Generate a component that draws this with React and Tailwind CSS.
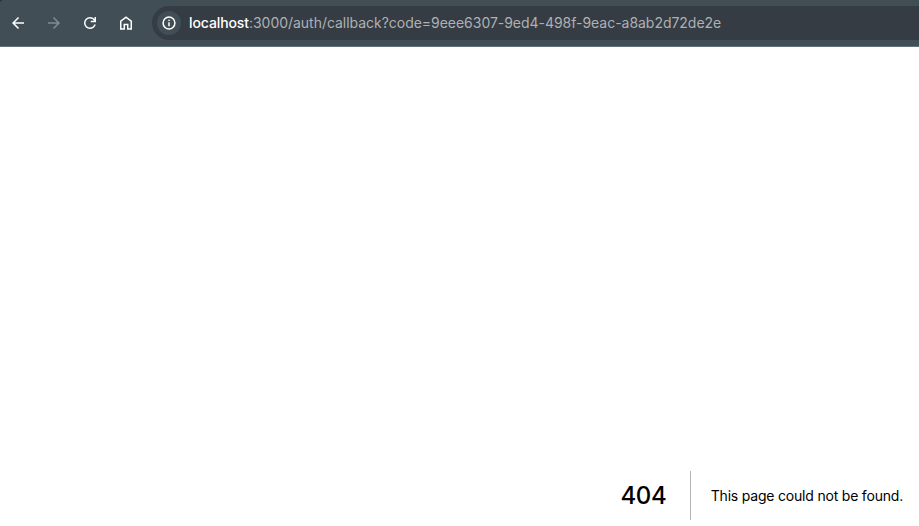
function Icon({ d, className = "" }) {
  return (
    <svg viewBox="0 0 24 24" className={`size-[18px] shrink-0 fill-current ${className}`} aria-hidden="true">
      <path d={d} />
    </svg>
  );
}

function NavButton({ label, d, className }) {
  return (
    <button type="button" aria-label={label} className="flex size-9 items-center justify-center">
      <Icon d={d} className={className} />
    </button>
  );
}

function Toolbar() {
  return (
    <div className="shrink-0 bg-[#252d33]">
      <header className="flex h-[47px] items-center rounded-tl-[3px] border-b border-[#62727a] bg-[#414e56] text-white">
        <nav className="flex">
          <NavButton label="Back" d="M20 11H7.83l5.59-5.59L12 4l-8 8 8 8 1.41-1.41L7.83 13H20v-2z" />
          <NavButton label="Forward" className="text-[#828b90]" d="M12 4l-1.41 1.41L16.17 11H4v2h12.17l-5.58 5.59L12 20l8-8z" />
          <NavButton label="Reload" d="M12 20q-3.35 0-5.675-2.325T4 12q0-3.35 2.325-5.675T12 4q1.725 0 3.3.7125T18 6.75V4h2v7h-7V9h4.2q-.8-1.4-2.1875-2.2T12 6Q9.5 6 7.75 7.75T6 12q0 2.5 1.75 4.25T12 18q1.925 0 3.475-1.1T17.65 14h2.1q-.7 2.65-2.85 4.325T12 20z" />
          <NavButton label="Home" d="M6 19h2.7v-6h6.6v6h2.7v-9l-6-4.5L6 10v9zm-2 2V9l8-6 8 6v12h-6.7v-6h-2.6v6H4z" />
        </nav>
        <div className="ml-2 flex h-[34px] flex-1 items-center rounded-l-full bg-[#353c44] pl-[5px]">
          <div className="flex size-6 items-center justify-center rounded-full bg-[#414e56]">
            <svg viewBox="0 0 14 14" className="size-3.5" fill="none" stroke="currentColor" strokeWidth="1.5" aria-hidden="true">
              <circle cx="7" cy="7" r="5.9" />
              <path d="M7 6.3v4M7 3.7v1.4" />
            </svg>
          </div>
          <p className="ml-2 whitespace-nowrap font-['Inter',sans-serif] text-[14px] leading-5 tracking-[-0.03px] text-[#aeb1b4]">
            <span className="font-[450] tracking-[-0.1px] text-white">localhost</span>:3000/auth/callback?code=9eee6307-9ed4-498f-9eac-a8ab2d72de2e
          </p>
        </div>
      </header>
    </div>
  );
}

export default function App() {
  return (
    <div className="flex h-screen flex-col overflow-hidden bg-white font-['Inter',sans-serif] text-black">
      <Toolbar />
      <main className="flex flex-1 items-end justify-end pr-4 pb-1.5">
        <h1 className="mr-5 flex h-[49px] items-center border-r border-[#b3b3b3] pr-[23.5px] text-2xl font-medium tracking-[-0.4px]">404</h1>
        <h2 className="flex h-[49px] items-center whitespace-nowrap text-sm tracking-[-0.2px]">This page could not be found.</h2>
      </main>
    </div>
  );
}
